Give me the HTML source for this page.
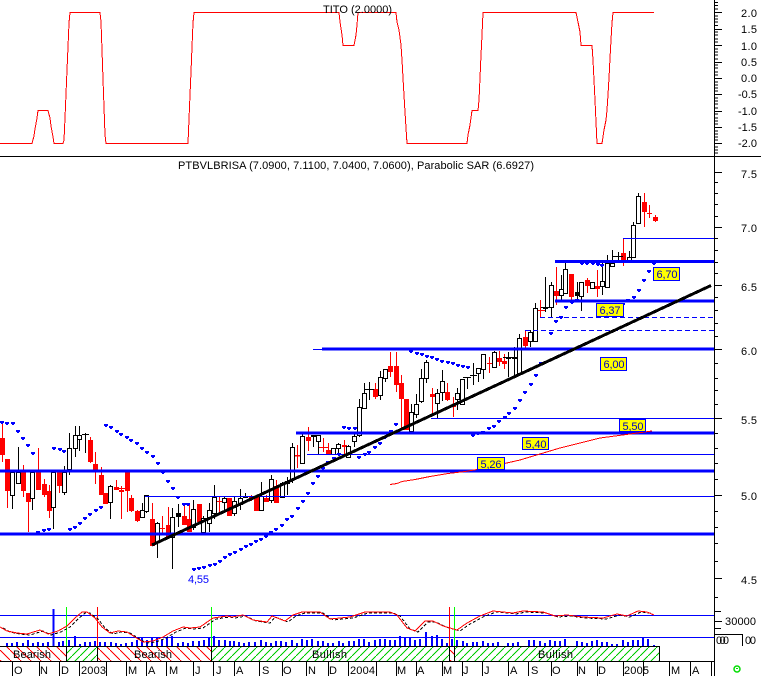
<!DOCTYPE html>
<html><head><meta charset="utf-8"><style>
html,body{margin:0;padding:0;background:#fff}
svg{display:block;position:absolute;left:0;top:0}
text{font-family:"Liberation Sans",sans-serif;font-size:11px;fill:#000}
.l{fill:#0000c0;text-anchor:middle}
.y{fill:#000;text-anchor:end}
.lb{fill:#ff0;stroke:#00f;stroke-width:1}
</style></head><body>
<svg width="761" height="676" viewBox="0 0 761 676" xmlns="http://www.w3.org/2000/svg">
<defs>
<pattern id="hr" width="10" height="10" patternUnits="userSpaceOnUse"><path d="M-1 -1L11 11" stroke="#f00" stroke-width="1" fill="none" shape-rendering="crispEdges"/></pattern>
<pattern id="hg" width="8" height="8" patternUnits="userSpaceOnUse"><path d="M-1 9L9 -1" stroke="#0c0" stroke-width="1" fill="none" shape-rendering="crispEdges"/></pattern>
</defs>

<!-- top panel -->
<path fill="none" stroke="#f00" stroke-width="1" shape-rendering="crispEdges" d="M0 143.5H32L34 136L35 129L37 118L38 110.5H48L50 118L51 126L53 137L54 143.5H63L64 140L65 118L66 94L67 70L68 47L69 23L70 12.5H100L101 22L102 50L103 79L104 107L105 135L106 143.5H188L189 119L190 95L191 72L192 47L193 23L194 12.5H339L340 22L342 35L343 45.5H354L356 35L357 25L358 12.5H396L397 22L399 30L401 45L402 60L403 78L404 95L405 112L406 128L407 143.5H467L468 135L470 125L472 110.5H478L479 100L480 78L481 55L482 35L483 12.5H576L578 22L580 32L581 45.5H592L593 60L594 80L595 100L596 122L597 143.5H602L604 130L606 120L607 110L608 95L609 78L610 58L611 40L612 23L613 12.5H654"/>
<text x="323" y="13" textLength="69">TITO (2.0000)</text>
<path stroke="#000" stroke-width="1" shape-rendering="crispEdges" fill="none" d="M0 156.5H761M714.5 0V676"/>
<path stroke="#000" stroke-width="1" shape-rendering="crispEdges" fill="none" d="M714 2.5h4M714 5.5h4M714 9h4M714 12.5h8M714 16h4M714 19h4M714 22h4M714 25.5h4M714 29.5h8M714 32h4M714 35h4M714 39h4M714 42h4M714 45.5h8M714 49h4M714 52h4M714 55h4M714 59h4M714 62.5h8M714 65h4M714 68h4M714 72h4M714 75h4M714 78.5h8M714 82h4M714 85h4M714 88h4M714 91h4M714 94.5h8M714 98h4M714 101h4M714 104h4M714 108h4M714 111.5h8M714 114h4M714 118h4M714 121h4M714 124h4M714 127.5h8M714 131h4M714 134h4M714 137h4M714 140h4M714 143.5h8M714 147h4M714 150h4M714 153h4"/>
<text class="y" x="757" y="17" textLength="16">2.0</text>
<text class="y" x="757" y="33" textLength="16">1.5</text>
<text class="y" x="757" y="50" textLength="16">1.0</text>
<text class="y" x="757" y="66" textLength="16">0.5</text>
<text class="y" x="757" y="82" textLength="16">0.0</text>
<text class="y" x="757" y="98" textLength="19">-0.5</text>
<text class="y" x="757" y="115" textLength="19">-1.0</text>
<text class="y" x="757" y="131" textLength="19">-1.5</text>
<text class="y" x="757" y="147" textLength="19">-2.0</text>

<text x="178" y="169" textLength="356">PTBVLBRISA (7.0900, 7.1100, 7.0400, 7.0600), Parabolic SAR (6.6927)</text>

<!-- main axis -->
<path stroke="#000" stroke-width="1" shape-rendering="crispEdges" fill="none" d="M714 172.5h8M714 182.5h4M714 193.5h4M714 204.5h4M714 216.5h4M714 227.5h8M714 238.5h4M714 250.5h4M714 262.5h4M714 273.5h4M714 285.5h8M714 297.5h4M714 310.5h4M714 323.5h4M714 336.5h4M714 349.5h8M714 363.5h4M714 378.5h4M714 390.5h4M714 404.5h4M714 418.5h8M714 433.5h4M714 448.5h4M714 463.5h4M714 479.5h4M714 495.5h8M714 511.5h4M714 527.5h4M714 543.5h4M714 561.5h4M714 578.5h8M714 597.5h4M714 611.5h7M714 621.5h8M714 628.5h7"/>
<text class="y" x="757" y="178" textLength="16">7.5</text>
<text class="y" x="757" y="232" textLength="16">7.0</text>
<text class="y" x="757" y="291" textLength="16">6.5</text>
<text class="y" x="757" y="355" textLength="16">6.0</text>
<text class="y" x="757" y="424" textLength="16">5.5</text>
<text class="y" x="757" y="500" textLength="16">5.0</text>
<text class="y" x="757" y="584" textLength="16">4.5</text>
<text class="y" x="756" y="625" textLength="31">30000</text>
<text x="745" y="644" textLength="11">00</text>
<text x="716" y="644" textLength="13">000</text>
<path stroke="#000" stroke-width="1" shape-rendering="crispEdges" fill="none" d="M714 634.5H742.5V646"/>

<!-- candles -->
<g shape-rendering="crispEdges" fill="none">
<path stroke="#f00" stroke-width="1" d="M2.5 423V462M7.5 460V508M23.5 465V497M28.5 493V532M38.5 448V490M44.5 479V497M49.5 485V518M59.5 472V493M90.5 437V463M95.5 452V484M101.5 467V495M105.5 493V504M116.5 480V490M121.5 486V519M127.5 472V512M131.5 495V512M137.5 510V522M152.5 503V546M162.5 516V533M168.5 507V537M184.5 505V525M189.5 505V532M199.5 504V523M219.5 496V512M229.5 498V516M251.5 495V501M256.5 496V511M266.5 495V502M276.5 480V503M297.5 445V468M308.5 427V451M323.5 438V452M328.5 443V454M344.5 440V455M375.5 383V399M390.5 352V377M396.5 352V392M401.5 375V430M406.5 399V430M432.5 388V415M447.5 383V401M453.5 397V417M489.5 357V373M499.5 351V366M504.5 354V369M525.5 331V350M540.5 300V317M556.5 267V305M571.5 274V300M587.5 278V293M597.5 270V297M623.5 239V266M644.5 193V227M649.5 205V218M655.5 215V222M293 456H302M318 447.5H328M116 488.5H126M535 310.5H546"/>
<path stroke="#f00" stroke-width="5" d="M2.5 438V455M7.5 459V491M23.5 472V491M28.5 493V502M38.5 472V490M44.5 484V495M49.5 491V511M59.5 472V486M90.5 440V462M95.5 464V472M101.5 475V495M105.5 493V504M116.5 487V490M121.5 490V492M127.5 472V491M131.5 498V511M137.5 511V521M152.5 519V546M162.5 528V529M168.5 525V537M184.5 516V525M189.5 519V532M199.5 504V522M219.5 501V502M229.5 498V516M251.5 496V499M256.5 496V511M266.5 498V502M276.5 486V503M297.5 455V456M308.5 437V441M323.5 447V448M328.5 450V454M344.5 445V447M375.5 389V397M390.5 366V372M396.5 366V385M401.5 383V399M406.5 399V430M432.5 394V397M447.5 392V400M453.5 405V407M489.5 363V364M499.5 358V362M504.5 361V364M525.5 337V346M540.5 310V311M556.5 291V296M571.5 274V297M587.5 280V286M597.5 286V289M623.5 253V261M644.5 202V212M649.5 213V214M655.5 217V221"/>
<path stroke="#000" stroke-width="1" d="M12.5 472V509M18.5 447V483M32.5 472V510M53.5 472V529M64.5 466V495M69.5 433V475M75.5 426V457M79.5 426V451M85.5 433V453M110.5 485V519M142.5 503V518M146.5 495V513M157.5 522V558M172.5 508V569M178.5 504V527M193.5 500V530M203.5 516V532M209.5 503V532M214.5 485V519M224.5 496V512M234.5 496V516M240.5 489V510M245.5 493V498M261.5 482V510M271.5 475V503M282.5 482V498M287.5 477V495M292.5 443V483M302.5 433V464M313.5 435V447M318.5 435V454M333.5 448V455M338.5 443V455M348.5 445V457M354.5 433V447M359.5 399V437M364.5 383V408M369.5 382V400M380.5 371V400M385.5 369V382M411.5 404V432M416.5 394V418M421.5 369V403M426.5 360V383M437.5 389V418M442.5 370V401M457.5 388V410M462.5 379V404M467.5 377V389M473.5 363V385M478.5 368V382M483.5 354V379M494.5 351V367M508.5 352V377M514.5 347V377M519.5 334V375M530.5 330V347M535.5 303V341M545.5 277V312M551.5 282V317M561.5 275V300M565.5 262V293M577.5 282V300M581.5 282V311M592.5 282V289M602.5 262V295M607.5 255V287M612.5 250V266M618.5 252V262M629.5 251V262M633.5 222V258M638.5 193V223M82 434.5H89M365 389.5H374M470 375.5H477M463 377.5H471M503 357.5H513M509 357.5H519M541 307.5H550M613 256.5H623"/>
<path stroke="#000" stroke-width="5" d="M178.5 513V517M245.5 496V498M313.5 435V437M369.5 389V390M467.5 377V378M473.5 375V376M577.5 292V296M618.5 256V257"/>
<path stroke="#000" stroke-width="1" fill="#fff" d="M10.5 472.5h4V495.5h-4zM16.5 472.5h4V483.5h-4zM30.5 472.5h4V498.5h-4zM51.5 472.5h4V507.5h-4zM62.5 472.5h4V492.5h-4zM67.5 448.5h4V469.5h-4zM73.5 435.5h4V448.5h-4zM77.5 435.5h4V439.5h-4zM108.5 486.5h4V502.5h-4zM140.5 510.5h4V517.5h-4zM144.5 495.5h4V511.5h-4zM155.5 523.5h4V542.5h-4zM170.5 517.5h4V537.5h-4zM191.5 509.5h4V527.5h-4zM201.5 518.5h4V532.5h-4zM207.5 510.5h4V523.5h-4zM212.5 497.5h4V513.5h-4zM222.5 498.5h4V502.5h-4zM232.5 501.5h4V513.5h-4zM238.5 498.5h4V504.5h-4zM259.5 496.5h4V510.5h-4zM269.5 479.5h4V500.5h-4zM280.5 483.5h4V497.5h-4zM285.5 481.5h4V483.5h-4zM290.5 447.5h4V479.5h-4zM300.5 436.5h4V463.5h-4zM316.5 435.5h4V441.5h-4zM331.5 448.5h4V454.5h-4zM336.5 444.5h4V448.5h-4zM346.5 446.5h4V457.5h-4zM352.5 436.5h4V441.5h-4zM357.5 407.5h4V435.5h-4zM362.5 393.5h4V408.5h-4zM378.5 377.5h4V395.5h-4zM383.5 369.5h4V378.5h-4zM409.5 412.5h4V431.5h-4zM414.5 404.5h4V414.5h-4zM419.5 378.5h4V401.5h-4zM424.5 362.5h4V378.5h-4zM435.5 393.5h4V403.5h-4zM440.5 381.5h4V392.5h-4zM455.5 393.5h4V399.5h-4zM460.5 379.5h4V404.5h-4zM476.5 368.5h4V373.5h-4zM481.5 354.5h4V369.5h-4zM492.5 352.5h4V367.5h-4zM506.5 357.5h4V358.5h-4zM512.5 357.5h4V358.5h-4zM517.5 338.5h4V373.5h-4zM528.5 332.5h4V341.5h-4zM533.5 308.5h4V341.5h-4zM543.5 307.5h4V308.5h-4zM549.5 285.5h4V307.5h-4zM559.5 289.5h4V295.5h-4zM563.5 269.5h4V293.5h-4zM579.5 282.5h4V296.5h-4zM590.5 282.5h4V288.5h-4zM600.5 281.5h4V286.5h-4zM605.5 263.5h4V287.5h-4zM610.5 263.5h4V266.5h-4zM627.5 257.5h4V261.5h-4zM631.5 225.5h4V257.5h-4zM636.5 196.5h4V223.5h-4z"/>
</g>

<!-- horizontal levels -->
<g shape-rendering="crispEdges" fill="none" stroke="#00f">
<path stroke-width="3" d="M0 534H714M0 471H714M296 433H714M322 349H714M555 301H714M555 261.5H714"/>
<path stroke-width="1" d="M145 496.5H714M307 454.5H714M431 418.5H714M623 238.5H714M313 349.5H322"/>
<path stroke-width="1" stroke-dasharray="5 3" d="M540 317.5H714M525 330.5H714"/>
</g>

<!-- SAR dots -->
<path fill="#00f" shape-rendering="crispEdges" d="M0 421h4v2h-1v1h-2v-1h-1zM5 422h4v2h-1v1h-2v-1h-1zM11 422h4v2h-1v1h-2v-1h-1zM16 430h4v2h-1v1h-2v-1h-1zM21 437h4v2h-1v1h-2v-1h-1zM26 444h4v2h-1v1h-2v-1h-1zM31 452h4v2h-1v1h-2v-1h-1zM52 447h4v2h-1v1h-2v-1h-1zM58 448h4v2h-1v1h-2v-1h-1zM62 450h4v2h-1v1h-2v-1h-1zM104 424h4v2h-1v1h-2v-1h-1zM109 426h4v2h-1v1h-2v-1h-1zM115 430h4v2h-1v1h-2v-1h-1zM119 433h4v2h-1v1h-2v-1h-1zM125 436h4v2h-1v1h-2v-1h-1zM129 439h4v2h-1v1h-2v-1h-1zM135 442h4v2h-1v1h-2v-1h-1zM140 447h4v2h-1v1h-2v-1h-1zM145 451h4v2h-1v1h-2v-1h-1zM151 455h4v2h-1v1h-2v-1h-1zM156 462h4v2h-1v1h-2v-1h-1zM161 471h4v2h-1v1h-2v-1h-1zM166 480h4v2h-1v1h-2v-1h-1zM171 487h4v2h-1v1h-2v-1h-1zM176 496h4v2h-1v1h-2v-1h-1zM182 503h4v2h-1v1h-2v-1h-1zM186 503h4v2h-1v1h-2v-1h-1zM36 531h4v2h-1v1h-2v-1h-1zM42 529h4v2h-1v1h-2v-1h-1zM47 528h4v2h-1v1h-2v-1h-1zM68 528h4v2h-1v1h-2v-1h-1zM73 526h4v2h-1v1h-2v-1h-1zM78 522h4v2h-1v1h-2v-1h-1zM83 517h4v2h-1v1h-2v-1h-1zM88 513h4v2h-1v1h-2v-1h-1zM94 509h4v2h-1v1h-2v-1h-1zM99 506h4v2h-1v1h-2v-1h-1zM192 568h4v2h-1v1h-2v-1h-1zM197 567h4v2h-1v1h-2v-1h-1zM202 566h4v2h-1v1h-2v-1h-1zM208 564h4v2h-1v1h-2v-1h-1zM213 563h4v2h-1v1h-2v-1h-1zM218 560h4v2h-1v1h-2v-1h-1zM223 556h4v2h-1v1h-2v-1h-1zM228 553h4v2h-1v1h-2v-1h-1zM233 551h4v2h-1v1h-2v-1h-1zM239 548h4v2h-1v1h-2v-1h-1zM244 545h4v2h-1v1h-2v-1h-1zM249 543h4v2h-1v1h-2v-1h-1zM254 540h4v2h-1v1h-2v-1h-1zM259 538h4v2h-1v1h-2v-1h-1zM264 535h4v2h-1v1h-2v-1h-1zM269 531h4v2h-1v1h-2v-1h-1zM274 528h4v2h-1v1h-2v-1h-1zM280 524h4v2h-1v1h-2v-1h-1zM285 518h4v2h-1v1h-2v-1h-1zM290 515h4v2h-1v1h-2v-1h-1zM296 507h4v2h-1v1h-2v-1h-1zM301 500h4v2h-1v1h-2v-1h-1zM306 492h4v2h-1v1h-2v-1h-1zM311 482h4v2h-1v1h-2v-1h-1zM316 475h4v2h-1v1h-2v-1h-1zM321 467h4v2h-1v1h-2v-1h-1zM326 461h4v2h-1v1h-2v-1h-1zM332 457h4v2h-1v1h-2v-1h-1zM337 453h4v2h-1v1h-2v-1h-1zM342 426h4v2h-1v1h-2v-1h-1zM347 427h4v2h-1v1h-2v-1h-1zM353 427h4v2h-1v1h-2v-1h-1zM357 456h4v2h-1v1h-2v-1h-1zM363 453h4v2h-1v1h-2v-1h-1zM367 451h4v2h-1v1h-2v-1h-1zM373 446h4v2h-1v1h-2v-1h-1zM378 442h4v2h-1v1h-2v-1h-1zM383 436h4v2h-1v1h-2v-1h-1zM389 430h4v2h-1v1h-2v-1h-1zM394 423h4v2h-1v1h-2v-1h-1zM409 350h4v2h-1v1h-2v-1h-1zM415 352h4v2h-1v1h-2v-1h-1zM420 353h4v2h-1v1h-2v-1h-1zM425 355h4v2h-1v1h-2v-1h-1zM430 356h4v2h-1v1h-2v-1h-1zM435 358h4v2h-1v1h-2v-1h-1zM440 360h4v2h-1v1h-2v-1h-1zM446 361h4v2h-1v1h-2v-1h-1zM451 362h4v2h-1v1h-2v-1h-1zM456 364h4v2h-1v1h-2v-1h-1zM461 365h4v2h-1v1h-2v-1h-1zM466 366h4v2h-1v1h-2v-1h-1zM471 434h4v2h-1v1h-2v-1h-1zM476 432h4v2h-1v1h-2v-1h-1zM481 431h4v2h-1v1h-2v-1h-1zM487 427h4v2h-1v1h-2v-1h-1zM492 425h4v2h-1v1h-2v-1h-1zM497 420h4v2h-1v1h-2v-1h-1zM503 416h4v2h-1v1h-2v-1h-1zM507 412h4v2h-1v1h-2v-1h-1zM513 407h4v2h-1v1h-2v-1h-1zM518 399h4v2h-1v1h-2v-1h-1zM523 391h4v2h-1v1h-2v-1h-1zM529 383h4v2h-1v1h-2v-1h-1zM534 374h4v2h-1v1h-2v-1h-1zM539 362h4v2h-1v1h-2v-1h-1zM549 332h4v2h-1v1h-2v-1h-1zM554 320h4v2h-1v1h-2v-1h-1zM559 316h4v2h-1v1h-2v-1h-1zM564 306h4v2h-1v1h-2v-1h-1zM570 301h4v2h-1v1h-2v-1h-1zM575 299h4v2h-1v1h-2v-1h-1zM580 262h4v2h-1v1h-2v-1h-1zM585 262h4v2h-1v1h-2v-1h-1zM591 262h4v2h-1v1h-2v-1h-1zM596 263h4v2h-1v1h-2v-1h-1zM600 264h4v2h-1v1h-2v-1h-1zM621 303h4v2h-1v1h-2v-1h-1zM626 299h4v2h-1v1h-2v-1h-1zM632 296h4v2h-1v1h-2v-1h-1zM637 289h4v2h-1v1h-2v-1h-1zM642 279h4v2h-1v1h-2v-1h-1zM647 270h4v2h-1v1h-2v-1h-1zM652 262h4v2h-1v1h-2v-1h-1z"/>

<!-- red MA & trendline -->
<path fill="none" stroke="#f00" stroke-width="1" shape-rendering="crispEdges" d="M390 484.5L397 483.5L402 481.5L415 479.5L430 476.5L448 473.5L465 471.5L480 469L520 460L560 448L600 438L630 434L652 431"/>
<path fill="none" stroke="#000" stroke-width="3" shape-rendering="crispEdges" d="M152 545L711 285.5"/>

<!-- labels -->
<g>
<rect class="lb" x="653.5" y="267.5" width="26" height="13"/><text class="l" x="667" y="278" textLength="21">6,70</text>
<rect class="lb" x="596.5" y="303.5" width="27" height="13"/><text class="l" x="610" y="314" textLength="21">6,37</text>
<rect class="lb" x="600.5" y="357.5" width="26" height="13"/><text class="l" x="614" y="368" textLength="21">6,00</text>
<rect class="lb" x="619.5" y="419.5" width="26" height="12"/><text class="l" x="633" y="430" textLength="21">5,50</text>
<rect class="lb" x="522.5" y="437.5" width="26" height="12"/><text class="l" x="536" y="448" textLength="21">5,40</text>
<rect class="lb" x="477.5" y="457.5" width="27" height="12"/><text class="l" x="491" y="468" textLength="21">5,26</text>
<text x="188" y="583" textLength="21" style="fill:#00f">4,55</text>
</g>

<!-- bottom panel -->
<g shape-rendering="crispEdges" fill="none">
<path stroke="#00f" stroke-width="2" d="M7 646V643M12 646V643M17 646V642M23 646V643M28 646V640M33 646V643M38 646V642M43 646V643M48 646V642M53.5 646V609M59 646V642M63 646V641M69 646V640M75 646V636M80 646V644M85 646V642M90 646V642M95 646V641M100 646V642M105 646V642M111 646V642M116 646V643M121 646V644M126 646V643M132 646V642M137 646V640M142 646V638M147 646V640M152 646V638M157 646V638M162 646V640M167 646V637M172 646V636M178 646V643M183 646V642M188 646V643M193 646V641M199 646V641M204 646V640M209 646V637M214 646V636M219 646V640M225 646V640M230 646V641M234 646V641M239 646V642M244 646V643M249 646V642M255 646V642M261 646V640M266 646V642M271 646V643M276 646V641M281 646V641M286 646V642M292 646V640M297 646V643M302 646V639M307 646V640M312 646V639M318 646V641M323 646V641M328 646V643M333 646V643M339 646V641M343 646V643M349 646V641M354 646V641M359 646V639M364 646V639M369 646V642M375 646V640M380 646V639M385 646V639M390 646V640M395 646V640M400 646V636M405 646V637M410 646V638M415 646V640M420 646V639M426 646V632M432 646V636M437 646V635M442 646V639M447 646V643M452 646V639M457 646V640M463 646V641M467 646V643M473 646V642M477 646V642M483 646V641M488 646V643M493 646V643M498 646V642M508 646V643M513 646V643M518 646V642M529 646V640M534 646V640M540 646V641M545 646V643M550 646V640M555 646V641M560 646V641M565 646V639M577 646V641M582 646V642M587 646V643M592 646V641M597 646V640M602 646V642M607 646V642M612 646V644M617 646V644M623 646V640M628 646V642M633 646V640M638 646V640M643 646V637M648 646V639M654 646V645"/>
<path stroke="#00f" stroke-width="1" d="M0 615.5H714M0 637.5H714"/>
<path stroke="#0f0" d="M66.5 607V661M211.5 607V646M454.5 607V646"/>
<path stroke="#f00" d="M97.5 607V646M449.5 607V646"/>
</g>
<path fill="none" stroke="#000" stroke-width="1" stroke-dasharray="3 2" shape-rendering="crispEdges" transform="translate(3 1)" d="M0 627L7 631L17 633L27 634L40 630L48 634L58 631L67 626L75 618L82 612L87 612L95 618L102 627L110 633L118 631L127 632L135 637L143 642L153 641L163 637L173 631L183 627L190 628L200 627L213 618L227 616L232 617L243 615L253 620L267 622L272 616L285 621L293 615L302 612L320 612L330 619L350 617L365 612L380 612L390 612L397 615L407 628L415 631L425 621L433 621L443 626L457 630L467 623L480 616L493 611L513 613L523 611L543 612L555 616L567 615L583 617L603 618L617 614L627 616L638 611L647 612L651 614"/>
<path fill="none" stroke="#f00" stroke-width="1" shape-rendering="crispEdges" d="M0 627L7 631L17 633L27 634L40 630L48 634L58 631L67 626L75 618L82 612L87 612L95 618L102 627L110 633L118 631L127 632L135 637L143 642L153 641L163 637L173 631L183 627L190 628L200 627L213 618L227 616L232 617L243 615L253 620L267 622L272 616L285 621L293 615L302 612L320 612L330 619L350 617L365 612L380 612L390 612L397 615L407 628L415 631L425 621L433 621L443 626L457 630L467 623L480 616L493 611L513 613L523 611L543 612L555 616L567 615L583 617L603 618L617 614L627 616L638 611L647 612L654 615"/>

<!-- bull/bear strip -->
<rect x="0" y="646" width="67" height="15" fill="url(#hr)"/>
<rect x="67" y="646" width="30" height="15" fill="url(#hg)"/>
<rect x="97" y="646" width="114" height="15" fill="url(#hr)"/>
<rect x="211" y="646" width="238" height="15" fill="url(#hg)"/>
<rect x="449" y="646" width="5" height="15" fill="url(#hr)"/>
<rect x="454" y="646" width="205" height="15" fill="url(#hg)"/>
<path stroke="#000" stroke-width="1" shape-rendering="crispEdges" fill="none" d="M0 646.5H659.5V661M0 661.5H714M66.5 646V661M97.5 646V661M211.5 646V661M449.5 646V661M454.5 646V661"/>
<text x="13" y="658" textLength="38">Bearish</text>
<text x="134" y="658" textLength="38">Bearish</text>
<text x="312" y="658" textLength="35">Bullish</text>
<text x="538" y="658" textLength="35">Bullish</text>

<!-- x ticks -->
<path stroke="#000" stroke-width="1" shape-rendering="crispEdges" fill="none" d="M12.5 661V676M39.5 661V676M59.5 661V676M79.5 661V676M106.5 661V676M126.5 661V676M146.5 661V676M166.5 661V676M193.5 661V676M213.5 661V676M234.5 661V676M259.5 661V676M282.5 661V676M306.5 661V676M328.5 661V676M348.5 661V676M376.5 661V676M396.5 661V676M416.5 661V676M442.5 661V676M462.5 661V676M482.5 661V676M508.5 661V676M528.5 661V676M551.5 661V676M577.5 661V676M597.5 661V676M623.5 661V676M643.5 661V676M669.5 661V676M690.5 661V676M711.5 661V676"/>
<g>
<text x="14" y="674">O</text><text x="40" y="674">N</text><text x="61" y="674">D</text><text x="81" y="674" textLength="25">2003</text>
<text x="128" y="674">M</text><text x="148" y="674">A</text><text x="169" y="674">M</text><text x="195" y="674">J</text>
<text x="216" y="674">J</text><text x="236" y="674">A</text><text x="262" y="674">S</text><text x="283" y="674">O</text>
<text x="308" y="674">N</text><text x="329" y="674">D</text><text x="350" y="674" textLength="25">2004</text>
<text x="397" y="674">M</text><text x="417" y="674">A</text><text x="443" y="674">M</text><text x="463" y="674">J</text>
<text x="484" y="674">J</text><text x="510" y="674">A</text><text x="531" y="674">S</text><text x="552" y="674">O</text>
<text x="578" y="674">N</text><text x="598" y="674">D</text><text x="624" y="674" textLength="25">2005</text>
<text x="671" y="674">M</text><text x="692" y="674">A</text>
</g>
<circle cx="737" cy="669" r="3" fill="none" stroke="#0d0" stroke-width="1.5"/>
<rect x="736" y="668" width="2" height="1" fill="#0d0"/>
</svg>
</body></html>
